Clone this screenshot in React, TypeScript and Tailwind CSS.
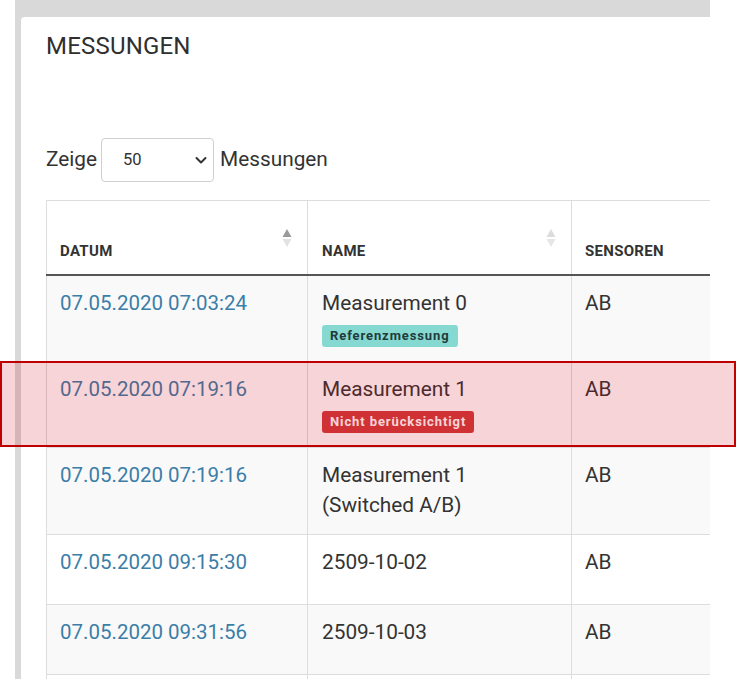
import React from "react";

const rows: {
  date: string;
  name: string[];
  badge?: "ref" | "nb";
  striped: boolean;
}[] = [
  { date: "07.05.2020 07:03:24", name: ["Measurement 0"], badge: "ref", striped: true },
  { date: "07.05.2020 07:19:16", name: ["Measurement 1"], badge: "nb", striped: false },
  { date: "07.05.2020 07:19:16", name: ["Measurement 1", "(Switched A/B)"], striped: true },
  { date: "07.05.2020 09:15:30", name: ["2509-10-02"], striped: false },
  { date: "07.05.2020 09:31:56", name: ["2509-10-03"], striped: true },
  { date: "", name: [], striped: false },
];

function SortIcon({ active }: { active: boolean }) {
  return (
    <svg width="10" height="20" viewBox="0 0 10 20" className="absolute right-[15px] top-[27px]">
      <path d="M5 1 L9.5 9 L0.5 9 Z" fill={active ? "#9a9a9a" : "#dcdcdc"} />
      <path d="M0.5 11 L9.5 11 L5 19 Z" fill={active ? "#e2e2e2" : "#e6e6e6"} />
    </svg>
  );
}

export default function App() {
  return (
    <div
      className="relative w-[736px] h-[679px] bg-white overflow-hidden text-[#333]"
      style={{ fontFamily: "Roboto, 'Noto Sans', Arial, sans-serif" }}
    >
      <div className="ml-[15px] w-[695px] h-full bg-[#d9d9d9] pt-[17px] pl-[6px]">
        <div className="h-full bg-white rounded-tl-[4px] pl-[25px] pt-[14px] overflow-hidden">
          <h1 className="text-[24px] leading-[30px] font-normal text-[#2f2f2f] tracking-[0.2px]">MESSUNGEN</h1>
          <div className="mt-[77px] flex items-center h-[44px] text-[20.8px]">
            <span>Zeige</span>
            <div className="ml-[4px] w-[113px] h-[44px] border border-[#cfcfcf] rounded-[4px] flex items-center justify-between pl-[21px] pr-[5px]">
              <span className="text-[16.5px] text-[#333]">50</span>
              <svg width="14" height="14" viewBox="0 0 14 14">
                <path d="M2.5 5 L7 9.5 L11.5 5" fill="none" stroke="#333" strokeWidth="2" strokeLinecap="round" strokeLinejoin="round" />
              </svg>
            </div>
            <span className="ml-[6px]">Messungen</span>
          </div>
          <table className="mt-[18px] table-fixed border-collapse w-[725px]">
            <colgroup>
              <col className="w-[261px]" />
              <col className="w-[264px]" />
              <col className="w-[200px]" />
            </colgroup>
            <thead>
              <tr className="h-[74px] border-t border-[#dddddd]">
                <th className="relative border-l border-r border-[#dddddd] border-b-2 border-b-[#555] align-bottom text-left pl-[13px] pb-[11px] text-[15px] font-bold tracking-[0.3px] text-[#333]">
                  DATUM
                  <SortIcon active={true} />
                </th>
                <th className="relative border-r border-[#dddddd] border-b-2 border-b-[#555] align-bottom text-left pl-[14px] pb-[11px] text-[15px] font-bold tracking-[0.3px] text-[#333]">
                  NAME
                  <SortIcon active={false} />
                </th>
                <th className="border-b-2 border-b-[#555] align-bottom text-left pl-[13px] pb-[11px] text-[15px] font-bold tracking-[0.3px] text-[#333]">
                  SENSOREN
                </th>
              </tr>
            </thead>
            <tbody>
              {rows.map((r, i) => (
                <tr key={i} className={r.striped ? "bg-[#f9f9f9]" : "bg-white"}>
                  <td className="border-l border-r border-b border-[#dddddd] align-top h-[70px] pt-[12px] pb-[14px] pl-[13px] text-[20.5px] leading-[30px] text-[#3b7ea8]">
                    {r.date}
                  </td>
                  <td className="border-r border-b border-[#dddddd] align-top pt-[12px] pb-[14px] pl-[14px] text-[20.8px] leading-[30px]">
                    {r.name.map((n, j) => (
                      <div key={j}>{n}</div>
                    ))}
                    {r.badge === "ref" && (
                      <div className="mt-[7px] flex w-fit items-center h-[22px] px-[8px] rounded-[3px] bg-[#86d9d1] text-[#1f3b3b] text-[13px] font-bold tracking-[0.9px] leading-none">
                        Referenzmessung
                      </div>
                    )}
                    {r.badge === "nb" && (
                      <div className="mt-[7px] flex w-fit items-center h-[22px] px-[8px] rounded-[3px] bg-[#d23c3c] text-white text-[13px] font-bold tracking-[0.9px] leading-none">
                        Nicht berücksichtigt
                      </div>
                    )}
                  </td>
                  <td className="border-b border-[#dddddd] align-top pt-[12px] pb-[14px] pl-[13px] text-[20.8px] leading-[30px]">
                    {r.date ? "AB" : ""}
                  </td>
                </tr>
              ))}
            </tbody>
          </table>
        </div>
      </div>
      <div className="absolute left-0 top-[361px] w-[736px] h-[86px] border-2 border-[#c00000] bg-[rgba(200,0,20,0.17)]" />
    </div>
  );
}
